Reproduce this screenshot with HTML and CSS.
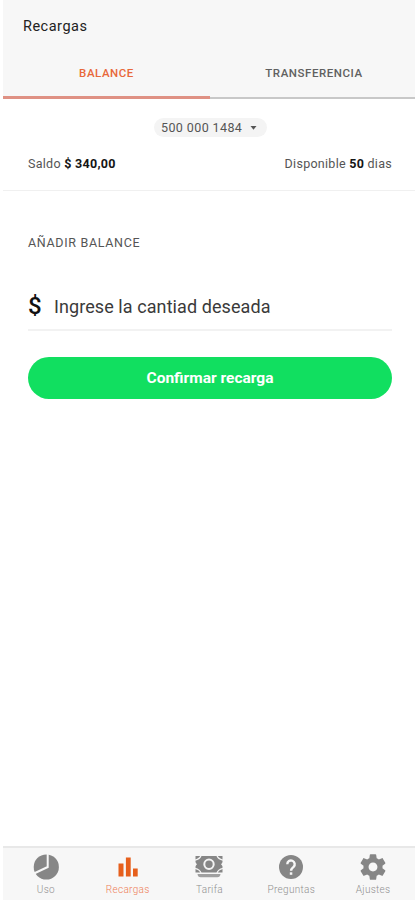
FILE: index.html
```html
<!DOCTYPE html>
<html lang="es">
<head>
<meta charset="utf-8">
<title>Recargas</title>
<link rel="stylesheet" href="styles.css">
</head>
<body>
<div class="app">
  <header class="header">
    <h1 class="title"><span>Recargas</span></h1>
    <div class="tabs">
      <div class="tab tab-active"><span>BALANCE</span></div>
      <div class="tab"><span>TRANSFERENCIA</span></div>
    </div>
  </header>
  <section class="summary">
    <div class="phone"><span class="number">500 000 1484</span><svg width="7" height="4" viewBox="0 0 7 4"><path d="M0.5 0h6L3.5 3.7z" fill="#555"/></svg></div>
    <div class="row">
      <span class="saldo">Saldo <b>$ 340,00</b></span>
      <span class="days">Disponible <b>50</b> dias</span>
    </div>
  </section>
  <main class="main">
    <h2 class="subtitle"><span>AÑADIR BALANCE</span></h2>
    <div class="field">
      <span class="currency">$</span>
      <span class="placeholder">Ingrese la cantiad deseada</span>
    </div>
    <div class="button"><span>Confirmar recarga</span></div>
  </main>
  <nav class="nav">
    <div class="item">
      <svg width="28" height="26" viewBox="0 0 28 26"><circle cx="14.300" cy="13" r="12.6" fill="#868686"/><path d="M15.700 0v13L2 19.500" fill="none" stroke="#f7f7f7" stroke-width="2"/></svg>
      <span class="label">Uso</span>
    </div>
    <div class="item item-active">
      <svg width="28" height="26" viewBox="0 0 28 26"><path d="M4.500 9.500h5V22.500h-5zM11.900 3.500h4.800V22.500h-4.800zM19 14.500h4.700V22.500H19z" fill="#e65f1c"/></svg>
      <span class="label">Recargas</span>
    </div>
    <div class="item">
      <svg width="28" height="26" viewBox="0 0 28 26"><path d="M.5 2h27v16.500H.5z" fill="#868686"/><path d="M6 1.500Q5 5 0 6.200M22 1.500q1 3.500 6 4.700M6 19Q5 15.500 0 14.300M22 19q1-3.500 6-4.700" fill="none" stroke="#f3f3f3" stroke-width="1.300"/><path d="M0 8l2 2.200-2 2.200zM28 8l-2 2.200 2 2.200z" fill="#f7f7f7"/><circle cx="14" cy="10.200" r="4.700" fill="#868686" stroke="#f3f3f3" stroke-width="2"/><path d="M2.500 20h23c-.3 2.200-1.200 3.200-3.200 3.200H5.700c-2 0-2.900-1-3.200-3.200z" fill="#a0a0a0"/></svg>
      <span class="label">Tarifa</span>
    </div>
    <div class="item">
      <svg width="28" height="26" viewBox="0 0 28 26"><circle cx="14" cy="13" r="12" fill="#868686"/><path d="M10.300 10.200a3.700 3.700 0 1 1 6.300 2.600c-1.600 1.500-2.500 2-2.500 4" fill="none" stroke="#f7f7f7" stroke-width="2.400"/><path d="M12.800 18.300h2.500v2.500h-2.500z" fill="#f7f7f7"/></svg>
      <span class="label">Preguntas</span>
    </div>
    <div class="item">
      <svg width="28" height="26" viewBox="1 1.800 22 20.400"><path fill="#868686" d="M19.430 12.980c.04-.32.070-.64.070-.98s-.03-.66-.07-.98l2.110-1.650c.19-.15.240-.42.120-.64l-2-3.460c-.12-.22-.39-.3-.61-.22l-2.490 1c-.52-.4-1.080-.73-1.690-.98l-.38-2.650C14.460 2.180 14.250 2 14 2h-4c-.25 0-.46.180-.49.420l-.38 2.650c-.61.250-1.170.590-1.690.980l-2.490-1c-.23-.09-.49 0-.61.220l-2 3.460c-.13.220-.07.490.120.640l2.110 1.650c-.04.320-.07.650-.07.980s.03.660.070.980l-2.110 1.650c-.19.150-.24.420-.12.640l2 3.460c.12.220.39.300.61.220l2.490-1c.52.400 1.080.730 1.690.980l.38 2.650c.03.240.24.420.49.420h4c.25 0 .46-.18.490-.42l.38-2.650c.61-.25 1.170-.59 1.690-.98l2.490 1c.23.090.49 0 .61-.22l2-3.460c.12-.22.070-.49-.12-.64l-2.110-1.650zM12 15.500c-1.930 0-3.500-1.570-3.500-3.500s1.570-3.500 3.500-3.500 3.500 1.570 3.500 3.500-1.570 3.500-3.500 3.500z"/></svg>
      <span class="label">Ajustes</span>
    </div>
  </nav>
</div>
</body>
</html>
```
FILE: styles.css
```css
* { box-sizing: border-box; }
body {
  margin: 0;
  background: #fff;
  color: #555;
  font-family: Roboto, "Liberation Sans", sans-serif;
}
h1, h2 { margin: 0; font-weight: 400; }
b { color: #151515; font-weight: 700; }
svg { display: block; }
.app {
  display: flex;
  flex-direction: column;
  height: 900px;
  padding: 0 3px;
}
.header {
  display: flex;
  flex-direction: column;
  height: 99px;
  background: #f7f7f7;
}
.title {
  height: 48px;
  padding: 17px 0 0 20px;
  color: #222;
  font-size: 14.500px;
  line-height: 20px;
  letter-spacing: 0.500px;
}
.tabs {
  display: grid;
  flex: 1;
  grid-template-columns: 207px 1fr;
}
.tab {
  padding: 10px 0 0 3px;
  border-bottom: 2px solid #c8c8c8;
  color: #606060;
  font-size: 11.500px;
  font-weight: 500;
  line-height: 31px;
  letter-spacing: 0.550px;
  text-align: center;
}
.tab-active {
  padding: 10px 0 0;
  border-bottom: 3px solid #df9184;
  color: #e8683a;
}
.summary {
  height: 92px;
  padding: 19px 23px 0 25px;
  border-bottom: 1px solid #f0f0f0;
}
.phone {
  display: flex;
  align-items: center;
  gap: 8px;
  width: 113px;
  height: 19px;
  margin: 0 auto;
  padding-left: 7.500px;
  border-radius: 10px;
  background: #f4f4f4;
  font-size: 12.500px;
  letter-spacing: 0.400px;
}
.row {
  display: flex;
  justify-content: space-between;
  margin-top: 17px;
  font-size: 12.500px;
  line-height: 20px;
  letter-spacing: 0.280px;
}
.main {
  flex: 1;
  padding: 42px 23px 0 25px;
}
.subtitle {
  font-size: 12.500px;
  line-height: 20px;
  letter-spacing: 0.670px;
}
.field {
  display: flex;
  align-items: center;
  height: 50px;
  margin-top: 28px;
  padding-top: 2px;
  border-bottom: 2px solid #f2f2f2;
}
.currency {
  width: 26px;
  color: #111;
  font-size: 24px;
  font-weight: 500;
}
.placeholder {
  color: #3a3a3a;
  font-size: 18px;
  letter-spacing: 0.080px;
}
.button {
  height: 42px;
  margin-top: 26px;
  border-radius: 21px;
  background: #11df60;
  color: #fff;
  font-size: 15.500px;
  font-weight: 700;
  line-height: 43px;
  text-align: center;
}
.nav {
  display: flex;
  height: 54px;
  padding: 6px 1px 0 2px;
  border-top: 2px solid #e8e8e8;
  background: #f7f7f7;
}
.item {
  display: flex;
  flex: 1;
  flex-direction: column;
  align-items: center;
  color: #909090;
}
.item-active { color: #ee7d57; }
.label {
  margin-top: 3px;
  font-size: 10px;
  font-weight: 300;
  line-height: 14px;
  letter-spacing: 0.300px;
}
```
